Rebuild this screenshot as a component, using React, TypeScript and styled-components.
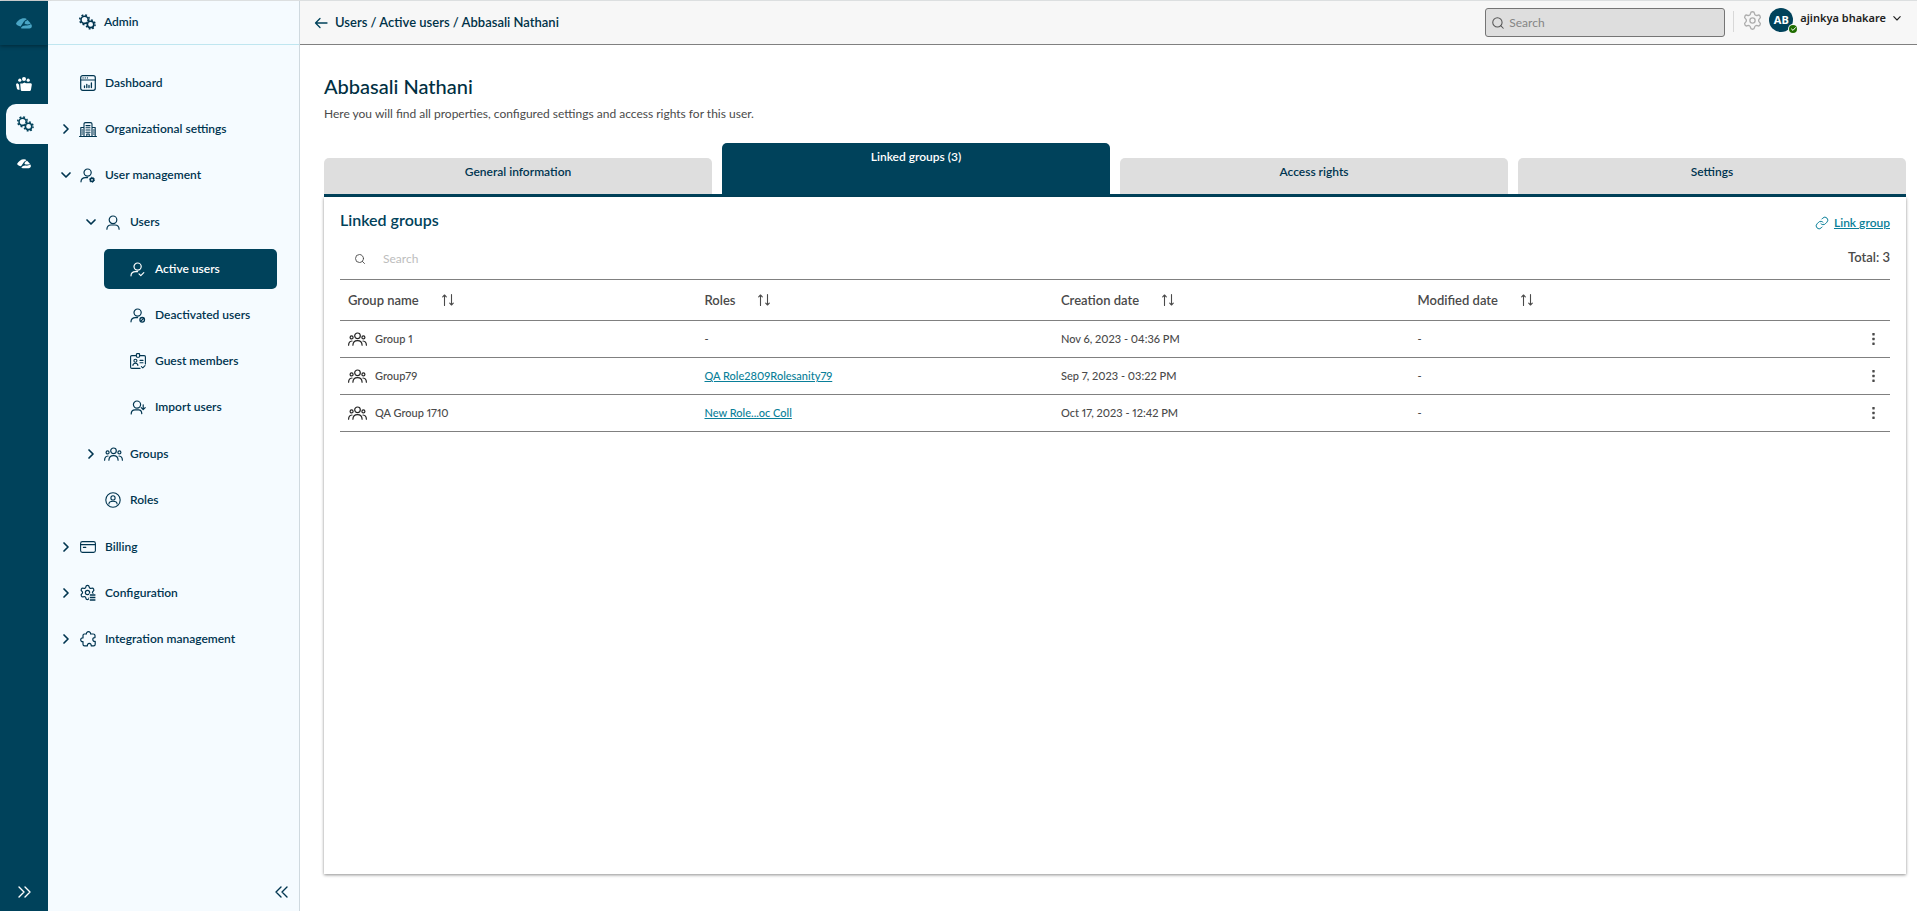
import React from "react";
import styled, { createGlobalStyle, css } from "styled-components";
import { Link as LinkIcon, Search, Settings } from "lucide-react";

const c = {
  navy: "#00425b",
  ink: "#003550",
  pale: "#f5fbff",
  teal: "#0a7f99",
  text: "#4a4a4a",
  line: "#808080",
  tab: "#dedede",
};

const GlobalStyle = createGlobalStyle`
  *, *::before, *::after { box-sizing: border-box; }
  body { margin: 0; background: #fff; color: ${c.text}; font: 400 12px/16px Lato, "Liberation Sans", sans-serif; }
  button, input { font: inherit; color: inherit; }
  button { padding: 0; border: 0; background: none; cursor: pointer; }
  a { color: inherit; }
  ul { list-style: none; margin: 0; padding: 0; }
  svg { display: block; flex: none; overflow: visible; }
`;

/* ---------- icons ---------- */

type IconProps = { w: number; h: number; sw?: number; children: React.ReactNode };
const Icon = ({ w, h, sw = 1.2, children }: IconProps) => (
  <svg width={w} height={h} viewBox={`0 0 ${w} ${h}`} fill="none" stroke="currentColor" strokeWidth={sw} strokeLinecap="round" strokeLinejoin="round" aria-hidden="true">
    {children}
  </svg>
);

const Logo = ({ size = 16 }: { size?: number }) => (
  <svg width={size} height={(size * 11) / 16} viewBox="0 0 16 11" fill="currentColor" aria-hidden="true">
    <path d="M0 5.8C1.6 2.6 4.6.2 8.2.3 9.4.3 10.2.7 10.8 1.3L8.2 3 4.6 8.4C2.6 8.2.8 7.2 0 5.8Z" />
    <path d="M11.6 1.9 14.8 5.4C13.4 6.3 11.8 6.6 9.8 6.3L8.4 5.2 9.6 3.2Z" />
    <path d="M5 9.8C6.2 8 8 7.2 10 7.5 12 7.8 13.8 7.2 15 6.1 15.8 7 16.2 8.2 15.6 9.2 15 10.3 13.8 10.6 12.4 10.6H6.8C5.8 10.6 5.2 10.4 5 9.8Z" />
  </svg>
);

const Gears = () => (
  <svg width="17" height="16" viewBox="0 0 17 16" fill="none" stroke="currentColor" aria-hidden="true">
    <circle cx="5.6" cy="5.8" r="3.6" strokeWidth="1.6" />
    <circle cx="5.6" cy="5.8" r="4.9" strokeWidth="1.5" strokeDasharray="1.9 1.95" />
    <circle cx="11.6" cy="10.4" r="4.4" fill={c.pale} stroke="none" />
    <circle cx="11.6" cy="10.4" r="3.2" strokeWidth="1.6" />
    <circle cx="11.6" cy="10.4" r="4.5" strokeWidth="1.5" strokeDasharray="1.75 1.784" />
  </svg>
);

const People = () => (
  <svg width="16" height="14" viewBox="0 0 16 14" fill="currentColor" aria-hidden="true">
    <circle cx="8" cy="2" r="2" />
    <circle cx="3.8" cy="3.2" r="1.6" />
    <circle cx="12.2" cy="3.2" r="1.6" />
    <path d="M4.2 6.6H6.6L8.4 5.4 10 6.2H14.4C15.4 6.2 15.9 6.8 15.8 7.8L15 12.4C14.8 13.4 14.2 13.9 13.2 13.9H6.4C5.4 13.9 4.8 13.4 4.7 12.4Z" />
    <path d="M1.4 6.2C.4 6.3 0 7 .1 8L.9 11.4C1.1 12.4 2.2 13 3.6 12.8L3 7.6Z" />
  </svg>
);

const ChevronRight = () => <Icon w={6} h={10} sw={1.7}><path d="M1 1 5 5 1 9" /></Icon>;
const ChevronDown = () => <Icon w={10} h={6} sw={1.7}><path d="M1 1 5 5 9 1" /></Icon>;
const DoubleRight = () => <Icon w={12} h={10} sw={1.4}><path d="M1 0 6 5 1 10M7 0l5 5-5 5" /></Icon>;
const DoubleLeft = () => <Icon w={12} h={10} sw={1.4}><path d="M5 0 0 5 5 10M11 0 6 5 11 10" /></Icon>;
const ArrowLeft = () => <Icon w={12} h={10} sw={1.3}><path d="M5 .5.5 5 5 9.5M.5 5H12" /></Icon>;
const SortIcon = () => <Icon w={12} h={12} sw={1.1}><path d="M2.5 11.5V1M.7 2.8 2.5 1l1.8 1.8M9.5.5V11M7.7 9.2 9.5 11l1.8-1.8" /></Icon>;

const DashboardIcon = () => (
  <Icon w={16} h={16}>
    <rect x=".7" y=".7" width="14.6" height="14.6" rx="2" />
    <path d="M.7 5H15.3M3 2.9h.1M5.2 2.9h.1M7.4 2.9h.1" />
    <path d="M4.5 12.5V11M6.8 12.5V9.5M9 12.5V10.5M11.4 12.5V8" strokeWidth="1.3" />
  </Icon>
);
const BuildingIcon = () => (
  <Icon w={18} h={15} sw={1.1}>
    <path d="M.5 14.5h17M1.8 14.5V5.5H5M16.2 14.5V5.5H13M5 14.5V2.1Q5 .6 6.5 .6h5Q13 .6 13 2.1V14.5M7.8 14.5V12h2.4v2.5" />
    <path d="M7 3.6h4M7 5.8h4M7 8h4M7 10.2h4M3 8h.8M3 10h.8M3 12h.8M14.4 8h.8M14.4 10h.8M14.4 12h.8" />
  </Icon>
);
const UserIcon = () => (
  <Icon w={14} h={15}>
    <circle cx="7" cy="4.8" r="3.8" />
    <path d="M.9 14.2C1 11.2 2.6 10 5 10h4c2.4 0 4 1.2 4.1 4.2" />
  </Icon>
);
const UserBase = () => (
  <>
    <circle cx="7.6" cy="4.6" r="3.6" />
    <path d="M1 13.8C1 11 2.6 9.6 5.6 9.6H7.6" />
  </>
);
const UserGearIcon = () => (
  <Icon w={16} h={15}>
    <UserBase />
    <circle cx="12" cy="11.8" r="1.7" strokeWidth="1.6" />
    <circle cx="12" cy="11.8" r="2.6" strokeWidth=".8" strokeDasharray="1.2 1.52" strokeLinecap="butt" />
  </Icon>
);
const UserCheckIcon = () => <Icon w={16} h={15}><UserBase /><path d="M9 11.8 10.8 13.6 13.8 10.6" /></Icon>;
const UserBlockIcon = () => (
  <Icon w={16} h={15}>
    <UserBase />
    <circle cx="12.2" cy="11.8" r="2.3" strokeWidth="1.3" />
    <path d="M10.6 13.4 13.8 10.2" strokeWidth="1.3" />
  </Icon>
);
const UserImportIcon = () => (
  <Icon w={16} h={15}>
    <circle cx="7" cy="4.6" r="3.6" />
    <path d="M1.2 14C1.2 11 2.8 9.8 5 9.8h3.6c1.8 0 3 1 3.2 3.8M13.2 4.8V9.4M11.2 7.6 13.2 9.6 15.2 7.6" />
  </Icon>
);
const BadgeIcon = () => (
  <Icon w={16} h={16} sw={1.1}>
    <path d="M5.6 2.6H1.8Q.6 2.6.6 3.8V14.2Q.6 15.4 1.8 15.4H10M10.2 2.6h4Q15.4 2.6 15.4 3.8V11" />
    <rect x="6.4" y=".6" width="3.2" height="3.6" rx=".6" />
    <circle cx="5.4" cy="7.8" r="1.5" />
    <path d="M2.9 12.4c.1-1.6 1-2.2 2.5-2.2s2.4.6 2.5 2.2M10 7.4h3M10 9.8h3M11.4 13.6l1.4 1.2 2.2-2.2" />
  </Icon>
);
const GroupIcon = () => (
  <Icon w={19} h={14}>
    <circle cx="9.5" cy="3.8" r="2.8" />
    <circle cx="3.6" cy="5.4" r="1.5" />
    <circle cx="15.4" cy="5.4" r="1.5" />
    <path d="M4.9 13.2C5 9.8 6.6 8.6 9.5 8.6s4.5 1.2 4.6 4.6M.6 13.2C.7 10.4 1.6 9.2 4 9M18.4 13.2C18.3 10.4 17.4 9.2 15 9" />
  </Icon>
);
const RoleIcon = () => (
  <Icon w={16} h={16} sw={1.1}>
    <circle cx="8" cy="8" r="7.2" />
    <circle cx="8" cy="5.9" r="2.1" />
    <path d="M3.9 12C4 10.2 5.2 9.3 8 9.3s4 .9 4.1 2.7" />
  </Icon>
);
const CardIcon = () => (
  <Icon w={16} h={12} sw={1.1}>
    <rect x=".6" y=".6" width="14.8" height="10.8" rx="1.8" />
    <path d="M.6 3.6H15.4M3.4 6.4H5.8" />
  </Icon>
);
const ConfigIcon = () => (
  <Icon w={16} h={16}>
    <Settings x={-1} y={-1} size={17} strokeWidth={1.7} />
    <path d="M9 8.6h8v8h-8z" fill={c.pale} stroke="none" />
    <path d="M9.8 10h5.6M9.8 12.5h5.6M9.8 15h5.6" strokeWidth="1.5" strokeLinecap="butt" />
  </Icon>
);
const PuzzleIcon = () => (
  <Icon w={16} h={16}>
    <path d="M3 4.4Q3 3 4.4 3H6.4C6.2 1.6 7.2.7 8.5.7S10.8 1.6 10.6 3H13.2Q15 3 15 4.6V6.6C13.6 6.5 12.8 7.3 12.8 8.5S13.6 10.6 15.2 10.4V13.2Q15.2 14.8 13.6 14.8H11.2C11.4 13.3 10.6 12.4 9.3 12.4S7.2 13.3 7.4 14.8H4.6Q3 14.8 3 13.2V10.6C1.5 10.8.7 10 .7 8.8S1.5 6.8 3 7Z" />
  </Icon>
);
const KebabIcon = () => (
  <svg width="3" height="12" viewBox="0 0 3 12" fill={c.text} aria-hidden="true">
    <rect x=".3" y="0" width="2.4" height="2.4" rx=".4" />
    <rect x=".3" y="4.8" width="2.4" height="2.4" rx=".4" />
    <rect x=".3" y="9.6" width="2.4" height="2.4" rx=".4" />
  </svg>
);

/* ---------- frame ---------- */

const Frame = styled.div`
  display: flex;
  min-height: 100vh;
  border-top: 1px solid #dcdfe0;
`;

const Rail = styled.nav`
  display: flex;
  flex-direction: column;
  flex: none;
  width: 48px;
  background: ${c.navy};
  color: #fff;
`;
const RailLogo = styled.a`
  display: grid;
  place-items: center;
  height: 44px;
  margin-bottom: 19px;
  color: #4aa5c5;
  box-shadow: 0 1px 4px rgba(0, 0, 0, 0.4);
`;
const RailItem = styled.a<{ $active?: boolean }>`
  display: grid;
  place-items: center;
  height: 40px;
  ${(p) => p.$active && css`
    margin-left: 6px;
    padding-right: 3px;
    border-radius: 10px 0 0 10px;
    background: ${c.pale};
    color: ${c.navy};
  `}
`;
const RailToggle = styled.button`
  display: grid;
  place-items: center;
  height: 38px;
  margin-top: auto;
`;

const Sidebar = styled.aside`
  display: flex;
  flex-direction: column;
  flex: none;
  width: 252px;
  border-right: 1px solid #cfd9df;
  background: ${c.pale};
  color: ${c.ink};
  font-weight: 600;
`;
const SidebarHeader = styled.div`
  display: flex;
  align-items: center;
  gap: 8px;
  height: 44px;
  padding: 0 0 1px 31px;
  border-bottom: 1px solid #bfe6f0;
`;
const SideNav = styled.nav`
  padding: 18px 22px 0 6px;
`;
const NavList = styled.ul<{ $nested?: boolean }>`
  display: grid;
  gap: 6px;
  ${(p) => p.$nested && css`
    margin-top: 7px;
    padding-left: 25px;
  `}
  li:not(:last-child) > & { margin-bottom: 1px; }
`;
const navRow = css`
  display: grid;
  grid-template-columns: 24px 20px 1fr;
  align-items: center;
  justify-items: center;
  width: 100%;
  height: 40px;
  border-radius: 5px;
  text-decoration: none;
`;
const NavLink = styled.a<{ $active?: boolean }>`
  ${navRow}
  ${(p) => p.$active && css`
    background: ${c.navy};
    color: #fff;
  `}
`;
const NavButton = styled.button`
  ${navRow}
`;
const NavLabel = styled.span`
  justify-self: start;
  padding-left: 7px;
`;
const SidebarToggle = styled.button`
  display: grid;
  place-items: center;
  align-self: flex-end;
  width: 34px;
  height: 38px;
  margin-top: auto;
`;

const Main = styled.div`
  display: flex;
  flex-direction: column;
  flex: 1;
  min-width: 0;
`;
const TopBar = styled.header`
  display: flex;
  align-items: center;
  height: 44px;
  padding: 0 16px 0 15px;
  border-bottom: 1px solid ${c.line};
  background: #f7f7f7;
`;
const Back = styled.button`
  margin-right: 8px;
  color: ${c.navy};
`;
const Crumbs = styled.nav`
  margin: 0 auto 2px 0;
  color: #003247;
  font-size: 13px;
  font-weight: 600;
  a { text-decoration: none; }
`;
const TopSearch = styled.label`
  display: flex;
  align-items: center;
  gap: 4px;
  width: 240px;
  height: 29px;
  margin-right: 8px;
  padding: 0 5px;
  border: 1px solid #757575;
  border-radius: 3px;
  background: ${c.tab};
`;
const Field = styled.input<{ $hint: string }>`
  min-width: 0;
  flex: 1;
  padding: 0;
  border: 0;
  outline: 0;
  background: none;
  &::placeholder { color: ${(p) => p.$hint}; opacity: 1; }
`;
const Account = styled.div`
  display: flex;
  align-items: center;
  height: 24px;
  margin-bottom: 5px;
`;
const Divider = styled.span`
  align-self: stretch;
  width: 1px;
  margin: 3px 8px 0 0;
  background: #d8d8d8;
`;
const GearButton = styled.button`
  margin-right: 6px;
  color: #adadad;
`;
const UserMenu = styled.button`
  display: flex;
  align-items: center;
  color: #222;
  font-family: "Noto Sans", sans-serif;
  font-size: 11px;
  font-weight: 600;
`;
const Avatar = styled.span`
  position: relative;
  display: grid;
  place-items: center;
  width: 24px;
  height: 24px;
  margin-right: 7px;
  border-radius: 50%;
  background: ${c.navy};
  color: #fff;
  font-weight: 700;
`;
const Status = styled.span`
  position: absolute;
  right: -4px;
  bottom: -1px;
  display: grid;
  place-items: center;
  width: 8px;
  height: 8px;
  border-radius: 50%;
  background: #1f6d00;
  box-shadow: 0 0 0 1px #f7f7f7;
`;
const UserName = styled.span`
  margin: 0 7px 4px 0;
`;
const MenuCaret = styled.span`
  margin-bottom: 4px;
`;

/* ---------- page ---------- */

const Page = styled.main`
  display: flex;
  flex-direction: column;
  flex: 1;
  padding: 29px 11px 37px 24px;
`;
const Title = styled.h1`
  margin: 0;
  color: #002f42;
  font-size: 20px;
  font-weight: 500;
  line-height: 24px;
`;
const Lead = styled.p`
  margin: 8px 0 21px;
`;
const Tabs = styled.div`
  display: grid;
  grid-template-columns: repeat(4, 1fr);
  column-gap: 10px;
  align-items: end;
  border-bottom: 3px solid ${c.navy};
`;
const Tab = styled.button<{ $active?: boolean }>`
  display: flex;
  justify-content: center;
  height: ${(p) => (p.$active ? "51px" : "36px")};
  padding-top: 6px;
  border-radius: 5px 5px 0 0;
  background: ${(p) => (p.$active ? c.navy : c.tab)};
  color: ${(p) => (p.$active ? "#fff" : c.ink)};
  font-weight: 600;
`;
const Panel = styled.section`
  flex: 1;
  padding: 12px 16px 16px;
  background: #fff;
  box-shadow: 0 1px 3px rgba(0, 0, 0, 0.45);
`;
const Bar = styled.div`
  display: flex;
  align-items: center;
  justify-content: space-between;
`;
const PanelTitle = styled.h2`
  margin: 0;
  color: ${c.navy};
  font-size: 16px;
  font-weight: 600;
  line-height: 20px;
`;
const Action = styled.button`
  display: flex;
  align-items: center;
  gap: 5px;
  margin-top: 6px;
  color: ${c.teal};
  font-weight: 600;
  span { text-decoration: underline; }
`;
const SearchBar = styled(Bar)`
  margin-top: 8px;
`;
const TableSearch = styled.label`
  display: flex;
  align-items: center;
  gap: 17px;
  width: 300px;
  height: 40px;
  padding-left: 14px;
`;
const Total = styled.span`
  padding-bottom: 4px;
  font-size: 13px;
  font-weight: 600;
`;
const Table = styled.table`
  width: 100%;
  border-collapse: separate;
  border-spacing: 0;
  border-top: 1px solid ${c.line};
  table-layout: fixed;
`;
const Head = styled.th`
  width: 23%;
  height: 41px;
  padding: 0 0 0 8px;
  border-bottom: 1px solid ${c.line};
  font-size: 13px;
  font-weight: 600;
  text-align: left;
`;
const SortButton = styled.button`
  display: flex;
  align-items: center;
  gap: 23px;
`;
const ActionHead = styled.th`
  padding: 0;
  border-bottom: 1px solid ${c.line};
`;
const Cell = styled.td`
  height: 37px;
  padding: 0 0 0 8px;
  border-bottom: 1px solid ${c.line};
  font-size: 11px;
  font-weight: 500;
  font-variant-numeric: proportional-nums;
`;
const GroupName = styled.span`
  display: flex;
  align-items: center;
  gap: 8px;
  svg { color: #222; }
`;
const RoleLink = styled.a`
  color: ${c.teal};
`;
const Kebab = styled.button`
  display: grid;
  place-items: center;
  width: 19px;
  height: 24px;
  margin: 0 7px 0 auto;
`;

/* ---------- data ---------- */

type NavItem = { label: string; icon: React.ReactNode; state?: "open" | "closed"; active?: boolean; items?: NavItem[] };

const NAV: NavItem[] = [
  { label: "Dashboard", icon: <DashboardIcon /> },
  { label: "Organizational settings", icon: <BuildingIcon />, state: "closed" },
  {
    label: "User management", icon: <UserGearIcon />, state: "open",
    items: [
      {
        label: "Users", icon: <UserIcon />, state: "open",
        items: [
          { label: "Active users", icon: <UserCheckIcon />, active: true },
          { label: "Deactivated users", icon: <UserBlockIcon /> },
          { label: "Guest members", icon: <BadgeIcon /> },
          { label: "Import users", icon: <UserImportIcon /> },
        ],
      },
      { label: "Groups", icon: <GroupIcon />, state: "closed" },
      { label: "Roles", icon: <RoleIcon /> },
    ],
  },
  { label: "Billing", icon: <CardIcon />, state: "closed" },
  { label: "Configuration", icon: <ConfigIcon />, state: "closed" },
  { label: "Integration management", icon: <PuzzleIcon />, state: "closed" },
];

const TABS = ["General information", "Linked groups (3)", "Access rights", "Settings"];
const COLUMNS = ["Group name", "Roles", "Creation date", "Modified date"];
const ROWS = [
  { name: "Group 1", role: null, created: "Nov 6, 2023 - 04:36 PM" },
  { name: "Group79", role: "QA Role2809Rolesanity79", created: "Sep 7, 2023 - 03:22 PM" },
  { name: "QA Group 1710", role: "New Role...oc Coll", created: "Oct 17, 2023 - 12:42 PM" },
];

const NavTree = ({ items, nested }: { items: NavItem[]; nested?: boolean }) => (
  <NavList $nested={nested}>
    {items.map((item) => (
      <li key={item.label}>
        {item.state ? (
          <NavButton type="button" aria-expanded={item.state === "open"}>
            {item.state === "open" ? <ChevronDown /> : <ChevronRight />}
            {item.icon}
            <NavLabel>{item.label}</NavLabel>
          </NavButton>
        ) : (
          <NavLink href="#" $active={item.active} aria-current={item.active ? "page" : undefined}>
            <span />
            {item.icon}
            <NavLabel>{item.label}</NavLabel>
          </NavLink>
        )}
        {item.items && <NavTree items={item.items} nested />}
      </li>
    ))}
  </NavList>
);

export default function App() {
  return (
    <Frame>
      <GlobalStyle />
      <Rail aria-label="Applications">
        <RailLogo href="#" aria-label="Home"><Logo /></RailLogo>
        <RailItem href="#" aria-label="Community"><People /></RailItem>
        <RailItem href="#" aria-label="Admin" $active><Gears /></RailItem>
        <RailItem href="#" aria-label="Cloud"><Logo size={14} /></RailItem>
        <RailToggle type="button" aria-label="Expand applications"><DoubleRight /></RailToggle>
      </Rail>

      <Sidebar>
        <SidebarHeader><Gears />Admin</SidebarHeader>
        <SideNav aria-label="Admin"><NavTree items={NAV} /></SideNav>
        <SidebarToggle type="button" aria-label="Collapse menu"><DoubleLeft /></SidebarToggle>
      </Sidebar>

      <Main>
        <TopBar>
          <Back type="button" aria-label="Back"><ArrowLeft /></Back>
          <Crumbs aria-label="Breadcrumb">
            <a href="#">Users</a> / <a href="#">Active users</a> / Abbasali Nathani
          </Crumbs>
          <TopSearch>
            <Search size={14} strokeWidth={1.8} color="#555" aria-hidden="true" />
            <Field type="text" placeholder="Search" aria-label="Search" $hint="#858585" />
          </TopSearch>
          <Account>
            <Divider />
            <GearButton type="button" aria-label="Settings"><Settings size={21} strokeWidth={1.5} /></GearButton>
            <UserMenu type="button">
              <Avatar>
                AB
                <Status><Icon w={5} h={4} sw={1}><path d="M.5 2 2 3.4 4.5.6" /></Icon></Status>
              </Avatar>
              <UserName>ajinkya bhakare</UserName>
              <MenuCaret><Icon w={8} h={5} sw={1.1}><path d="M.8.6 4 4 7.2.6" /></Icon></MenuCaret>
            </UserMenu>
          </Account>
        </TopBar>

        <Page>
          <Title>Abbasali Nathani</Title>
          <Lead>Here you will find all properties, configured settings and access rights for this user.</Lead>
          <Tabs role="tablist">
            {TABS.map((label, i) => (
              <Tab key={label} type="button" role="tab" aria-selected={i === 1} $active={i === 1}>{label}</Tab>
            ))}
          </Tabs>
          <Panel>
            <Bar>
              <PanelTitle>Linked groups</PanelTitle>
              <Action type="button"><LinkIcon size={14} strokeWidth={1.7} /><span>Link group</span></Action>
            </Bar>
            <SearchBar>
              <TableSearch>
                <Search size={12} strokeWidth={1.8} aria-hidden="true" />
                <Field type="text" placeholder="Search" aria-label="Search groups" $hint="#bdbdbd" />
              </TableSearch>
              <Total>Total: 3</Total>
            </SearchBar>
            <Table>
              <thead>
                <tr>
                  {COLUMNS.map((label) => (
                    <Head key={label} scope="col"><SortButton type="button">{label}<SortIcon /></SortButton></Head>
                  ))}
                  <ActionHead aria-label="Actions" />
                </tr>
              </thead>
              <tbody>
                {ROWS.map((row) => (
                  <tr key={row.name}>
                    <Cell><GroupName><GroupIcon />{row.name}</GroupName></Cell>
                    <Cell>{row.role ? <RoleLink href="#">{row.role}</RoleLink> : "-"}</Cell>
                    <Cell>{row.created}</Cell>
                    <Cell>-</Cell>
                    <Cell><Kebab type="button" aria-label={`Actions for ${row.name}`}><KebabIcon /></Kebab></Cell>
                  </tr>
                ))}
              </tbody>
            </Table>
          </Panel>
        </Page>
      </Main>
    </Frame>
  );
}
